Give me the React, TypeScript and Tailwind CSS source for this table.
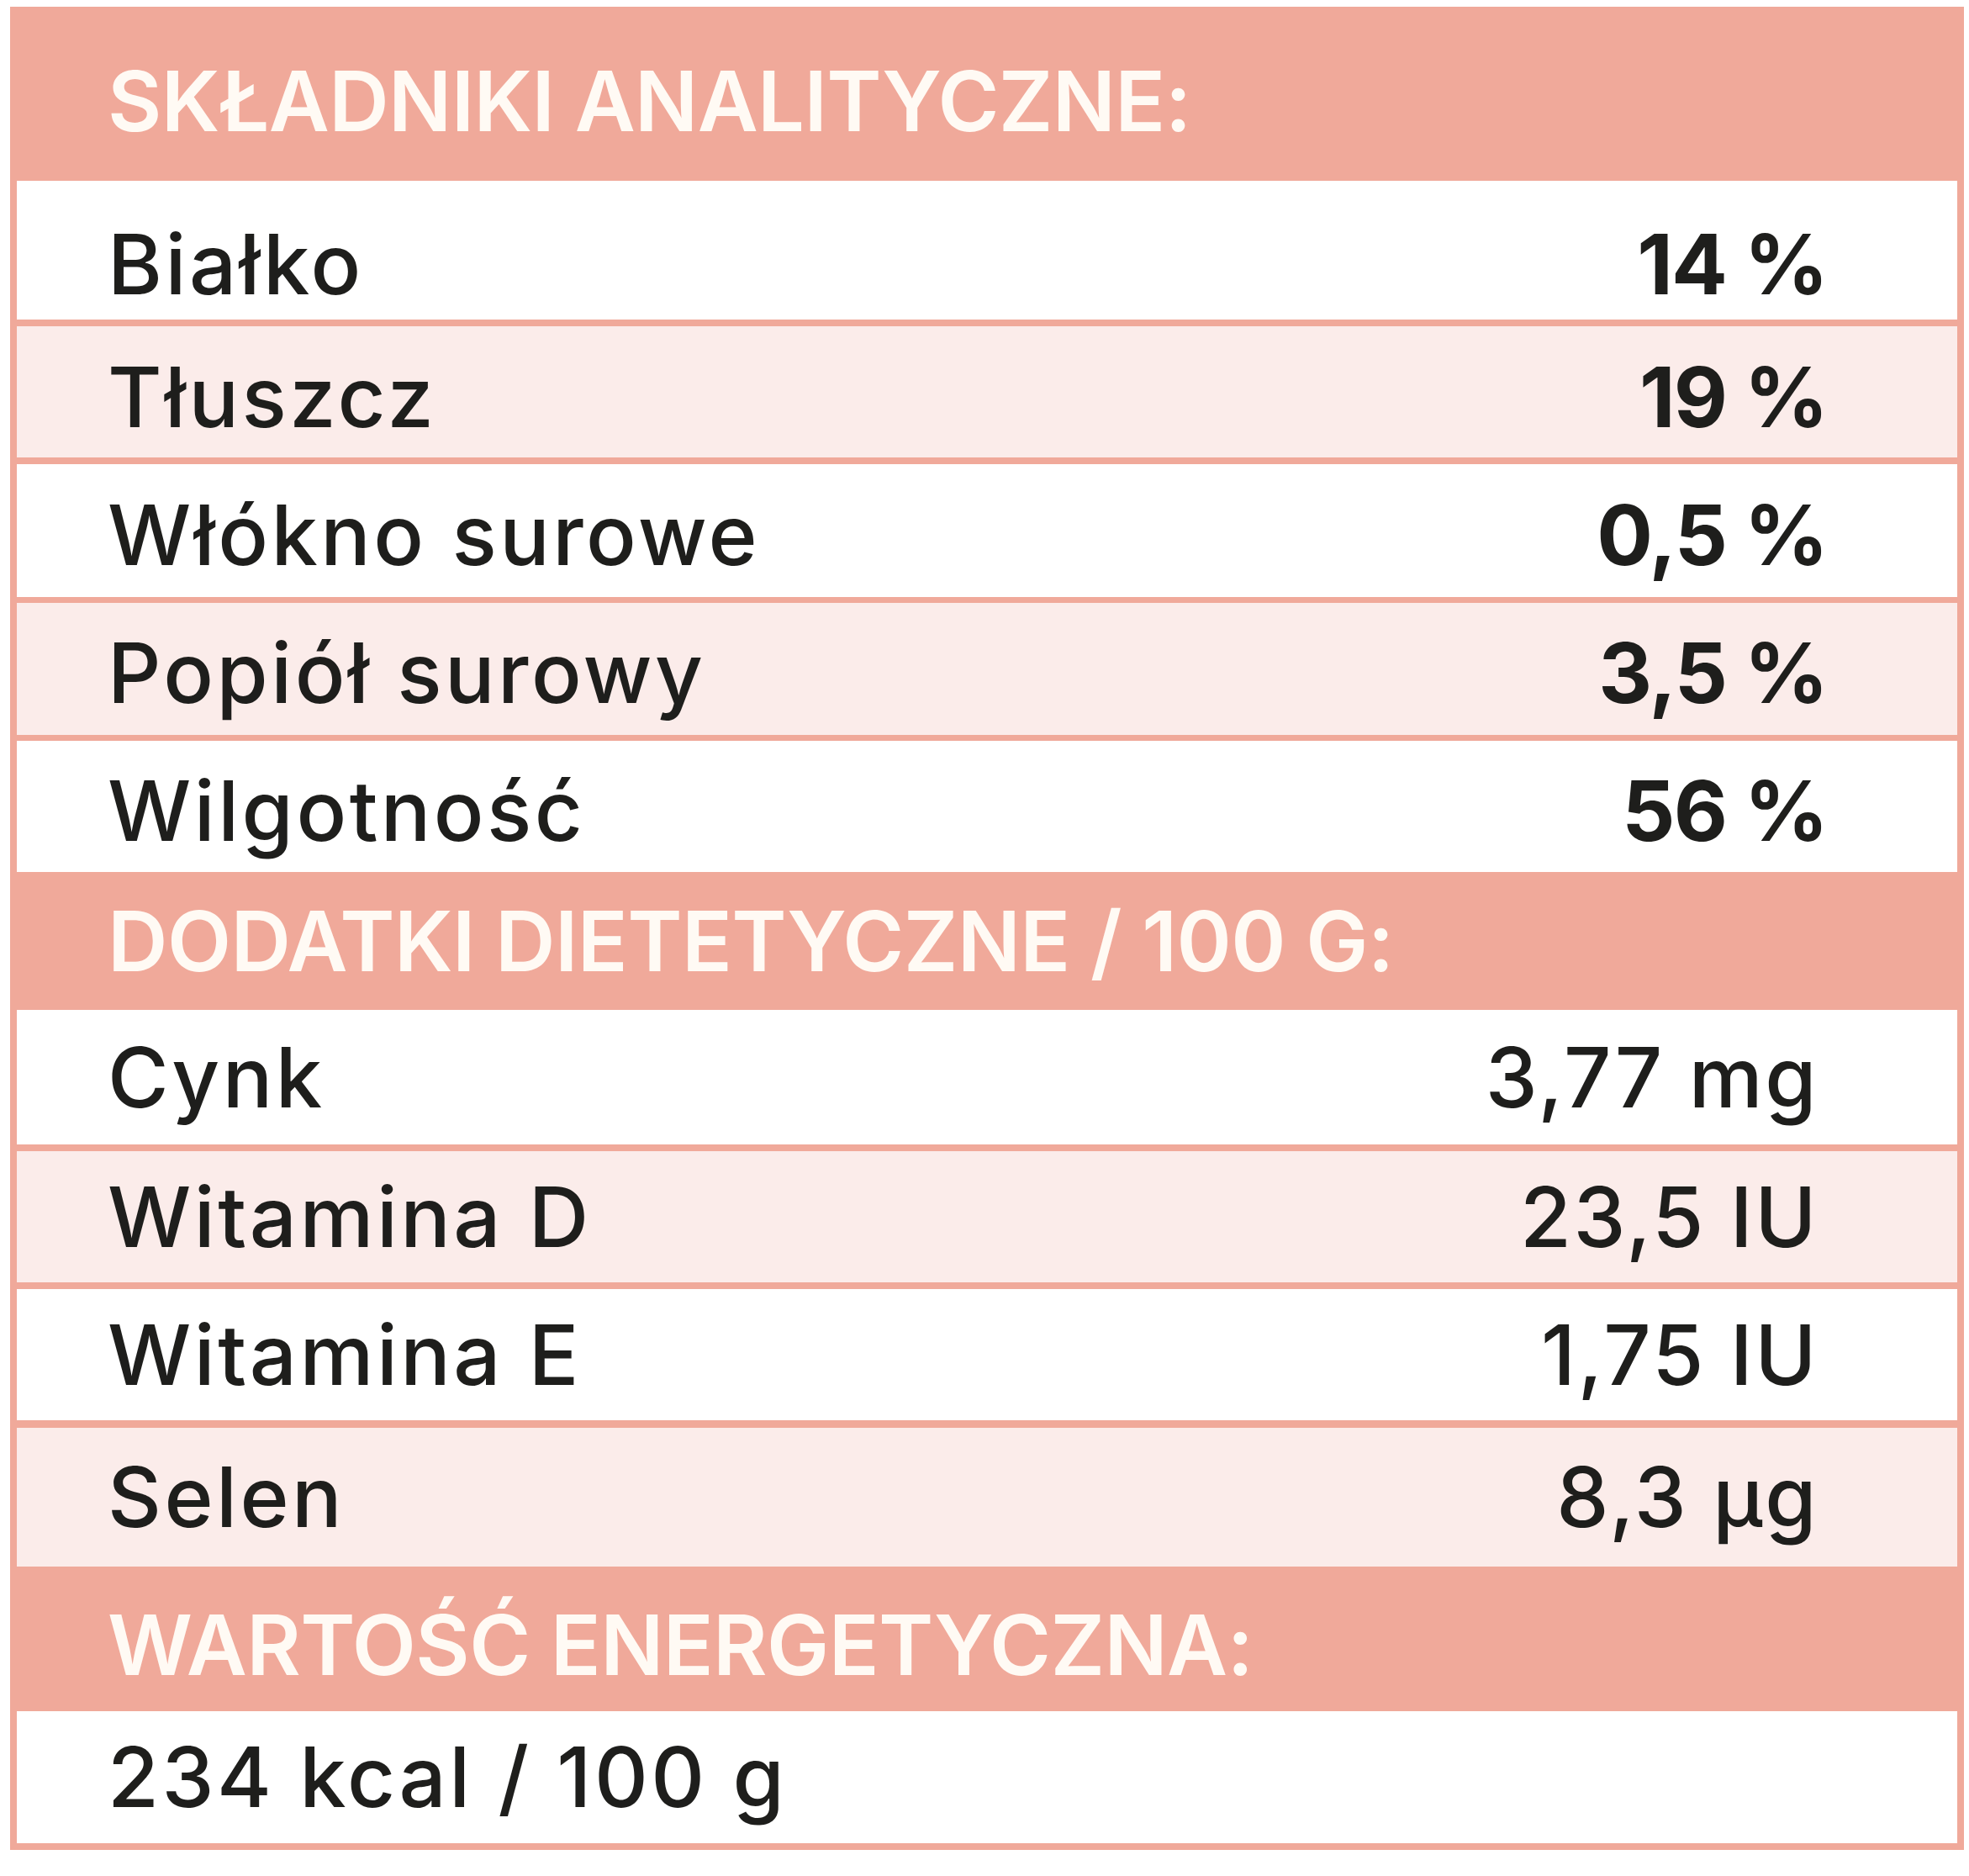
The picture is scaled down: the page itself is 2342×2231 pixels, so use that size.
import React from 'react';

const font = { fontFamily: 'Inter, "Liberation Sans", sans-serif' };

function Header({ children, className }: { children: React.ReactNode; className: string }) {
  return (
    <div className={`flex items-center bg-[#f0a99a] pl-[108px] ${className}`}>
      <span className="text-[99px] font-semibold leading-none tracking-[-0.006em] text-[#fffaf4] uppercase">
        {children}
      </span>
    </div>
  );
}

interface RowProps {
  label: string;
  value?: string;
  bold?: boolean;
  shade?: boolean;
  className: string;
}

function Row({ label, value, bold = false, shade = false, className }: RowProps) {
  return (
    <div
      className={`flex items-center justify-between pl-[108px] ${bold ? 'pr-[155px]' : 'pr-[165px]'} ${
        shade ? 'bg-[#fbecea]' : 'bg-white'
      } ${className}`}
    >
      <span className="text-[99px] font-medium leading-none tracking-[0.035em] text-[#1e1e1c]">{label}</span>
      {value && (
        <span
          className={`text-[99px] leading-none text-[#1e1e1c] ${
            bold ? 'font-bold tracking-[-0.02em]' : 'font-medium tracking-[0.025em]'
          }`}
        >
          {value}
        </span>
      )}
    </div>
  );
}

function Sep({ className }: { className: string }) {
  return <div className={`bg-[#f0a99a] ${className}`} />;
}

export default function App() {
  return (
    <div className="min-h-screen bg-white pt-[8px] pl-[12px]" style={font}>
      <div className="flex w-[2324px] flex-col border-[8px] border-[#f0a99a]">
        <Header className="h-[199px] pt-[10px]">Składniki analityczne:</Header>
        <Row label="Białko" value="14 %" bold className="h-[165px] pt-[34px]" />
        <Sep className="h-[8px]" />
        <Row label="Tłuszcz" value="19 %" bold shade className="h-[156px] pt-[12px]" />
        <Sep className="h-[8px]" />
        <Row label="Włókno surowe" value="0,5 %" bold className="h-[158px] pt-[10px]" />
        <Sep className="h-[7px]" />
        <Row label="Popiół surowy" value="3,5 %" bold shade className="h-[157px] pt-[10px]" />
        <Sep className="h-[7px]" />
        <Row label="Wilgotność" value="56 %" bold className="h-[156px] pt-[10px]" />
        <Header className="h-[164px]">Dodatki dietetyczne / 100 g:</Header>
        <Row label="Cynk" value="3,77 mg" className="h-[160px]" />
        <Sep className="h-[8px]" />
        <Row label="Witamina D" value="23,5 IU" shade className="h-[156px]" />
        <Sep className="h-[8px]" />
        <Row label="Witamina E" value="1,75 IU" className="h-[156px]" />
        <Sep className="h-[9px]" />
        <Row label="Selen" value="8,3 µg" shade className="h-[165px]" />
        <Header className="h-[172px] pt-[14px]">Wartość energetyczna:</Header>
        <Row label="234 kcal / 100 g" className="h-[157px]" />
      </div>
    </div>
  );
}
